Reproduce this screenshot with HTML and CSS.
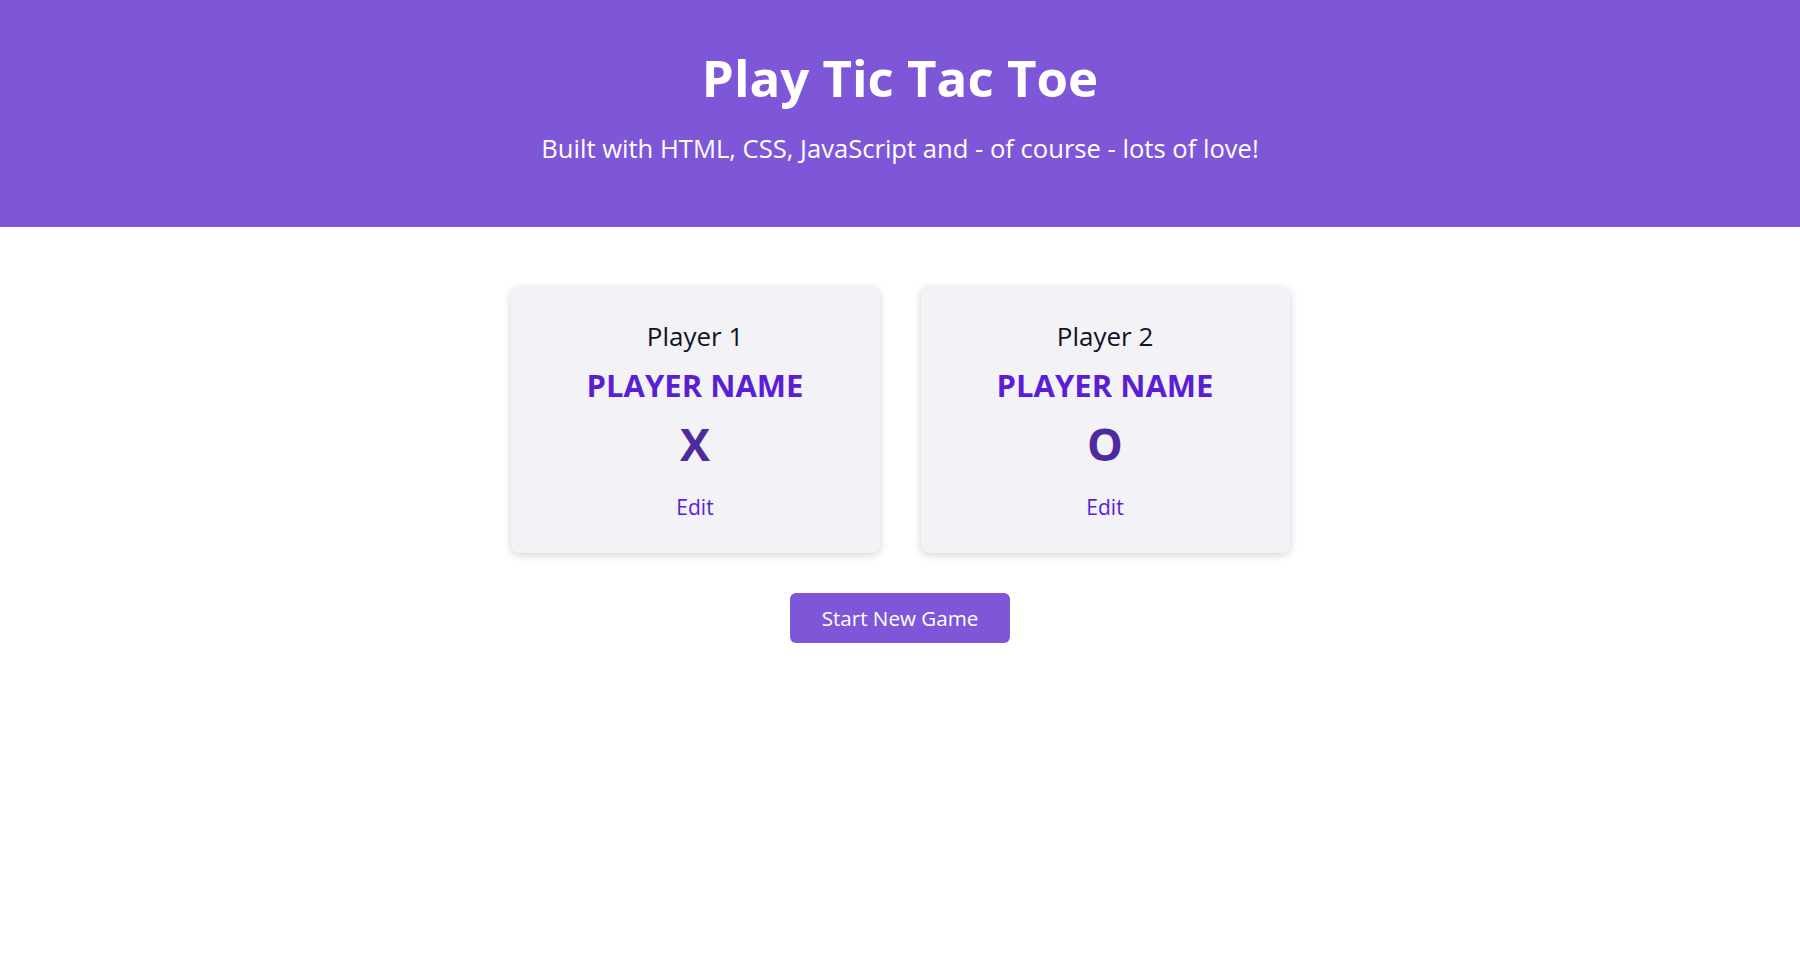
FILE: index.html
```html
<!DOCTYPE html>
<html lang="en">
<head>
<meta charset="utf-8">
<title>Tic Tac Toe</title>
<link rel="stylesheet" href="styles.css">
</head>
<body>
<header class="main-header">
  <h1 class="title">Play Tic Tac Toe</h1>
  <p class="subtitle">Built with HTML, CSS, JavaScript and - of course - lots of love!</p>
</header>
<main class="content">
  <section class="players">
    <article class="player-card">
      <h2 class="player-label">Player 1</h2>
      <h3 class="player-name">PLAYER NAME</h3>
      <p class="player-symbol">X</p>
      <button class="edit-btn">Edit</button>
    </article>
    <article class="player-card">
      <h2 class="player-label">Player 2</h2>
      <h3 class="player-name">PLAYER NAME</h3>
      <p class="player-symbol">O</p>
      <button class="edit-btn">Edit</button>
    </article>
  </section>
  <div class="actions">
    <button class="start-btn">Start New Game</button>
  </div>
</main>
</body>
</html>
```
FILE: styles.css
```css
* { box-sizing: border-box; }

body {
  margin: 0;
  font-family: "Open Sans", "Noto Sans", sans-serif;
  color: #0f1020;
  background: #ffffff;
}

.main-header {
  background: #7e57d9;
  color: #ffffff;
  text-align: center;
  padding: 48px 16px 60px;
}

.title {
  margin: 0;
  font-size: 51px;
  line-height: 58px;
  font-weight: 700;
}

.subtitle {
  margin: 25px 0 0;
  font-size: 25.6px;
  line-height: 36px;
  font-weight: 400;
}

.content {
  padding-top: 60px;
  display: flex;
  flex-direction: column;
  align-items: center;
}

.players {
  display: grid;
  grid-template-columns: 369px 369px;
  gap: 41px;
}

.player-card {
  background: #f2f2f7;
  border-radius: 8px;
  box-shadow: 0 2px 8px rgba(0, 0, 0, 0.18);
  height: 266px;
  padding-top: 31px;
  text-align: center;
  display: flex;
  flex-direction: column;
  align-items: center;
}

.player-label {
  margin: 0;
  font-size: 26px;
  font-weight: 400;
  line-height: 36px;
  color: #111322;
}

.player-name {
  margin: 11px 0 0;
  font-size: 31px;
  font-weight: 700;
  line-height: 40px;
  color: #5a1fd4;
}

.player-symbol {
  margin: 11px 0 0;
  font-size: 45px;
  font-weight: 700;
  line-height: 56px;
  color: #4e2a9e;
}

.edit-btn {
  margin-top: 20px;
  font: inherit;
  font-size: 21px;
  line-height: 30px;
  color: #5a1fd4;
  background: none;
  border: none;
  padding: 0 8px;
  cursor: pointer;
}

.actions {
  margin-top: 40px;
}

.start-btn {
  width: 220px;
  height: 50px;
  font: inherit;
  font-size: 20.6px;
  color: #ffffff;
  background: #7e57d9;
  border: none;
  border-radius: 6px;
  cursor: pointer;
}
```
